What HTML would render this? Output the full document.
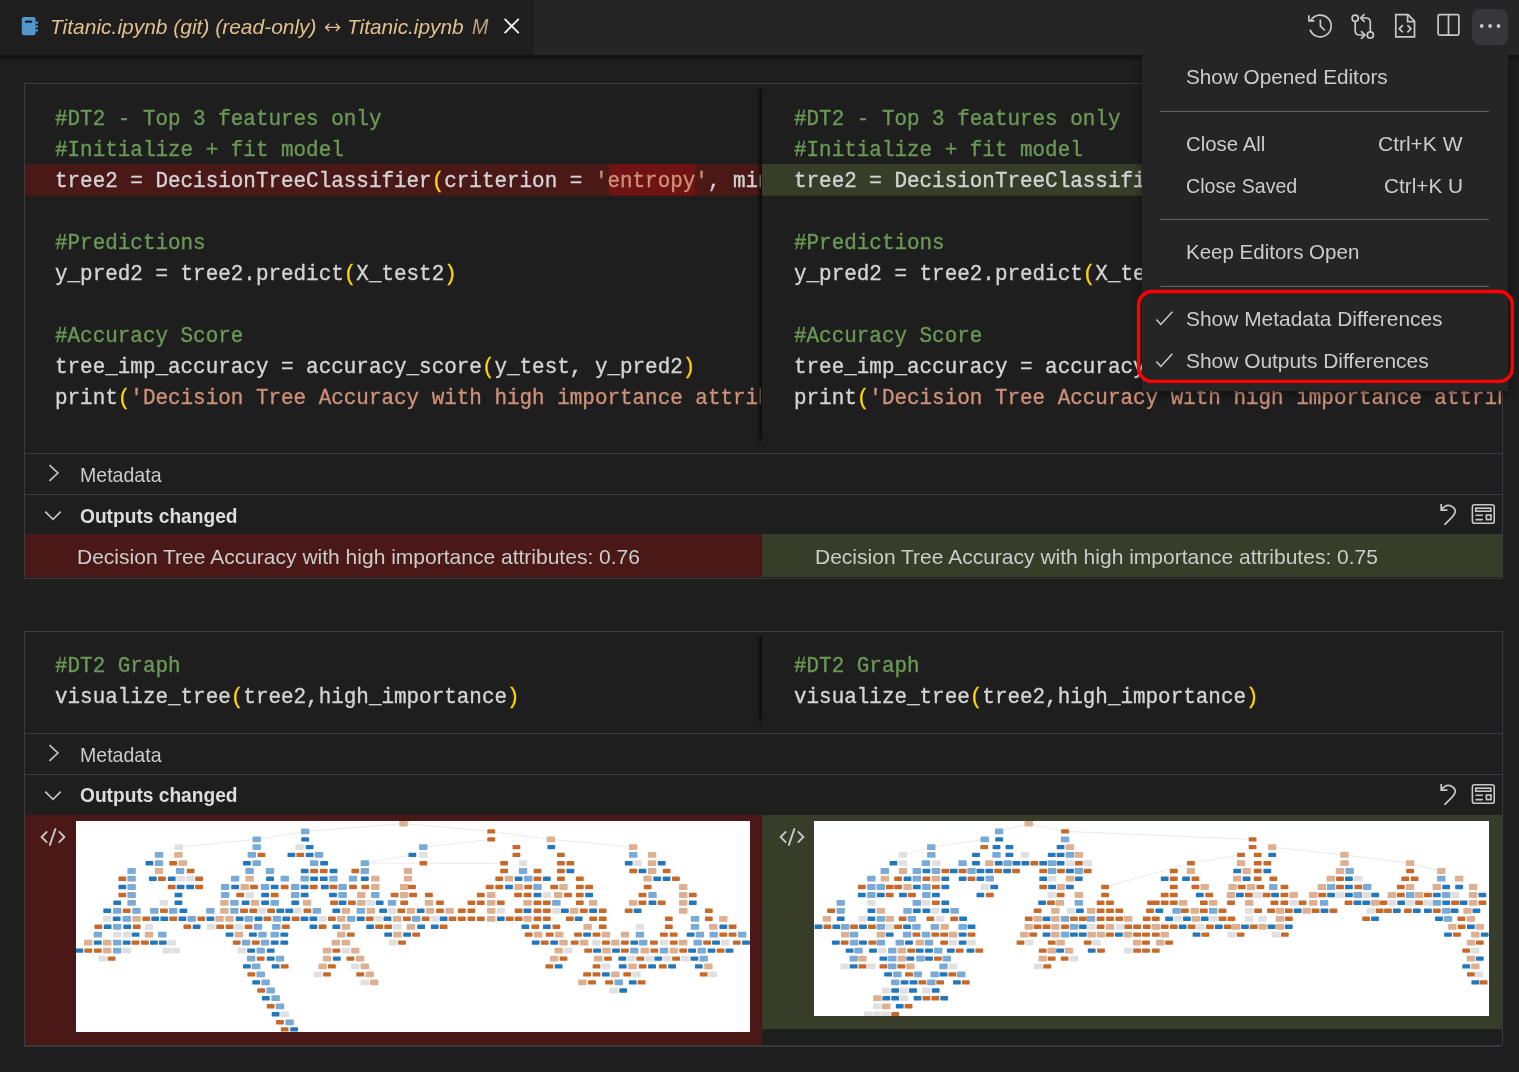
<!DOCTYPE html>
<html><head><meta charset="utf-8"><title>Titanic.ipynb diff</title>
<style>
html,body{margin:0;padding:0;background:#1e1e1e}
body{width:1519px;height:1072px;position:relative;overflow:hidden;font-family:"Liberation Sans",sans-serif}
.t{position:absolute;white-space:nowrap;font-family:"Liberation Sans",sans-serif}
.clip{position:absolute;overflow:hidden}
.code{position:absolute;white-space:pre;-webkit-text-stroke:0.35px;transform:scaleY(1.07);transform-origin:0 21.1px;font-family:"Liberation Mono",monospace;font-size:20.93px;height:31px;line-height:31px;color:#d4d4d4}
</style></head><body>
<div style="position:absolute;left:0px;top:0px;width:1519px;height:55px;background:#252526;"></div>
<div style="position:absolute;left:0px;top:0px;width:534px;height:55px;background:#1e1e1e;"></div>
<div style="position:absolute;left:0;top:55px;width:1519px;height:6px;background:linear-gradient(#151515 0,#121212 22%,#161616 45%,#181818 70%,#1c1c1c 92%,#1e1e1e)"></div>
<svg style="position:absolute;left:20px;top:16px" width="20" height="21" viewBox="0 0 20 21">
<rect x="1.8" y="1" width="13.8" height="18.2" rx="2.2" fill="#5397cc"/>
<rect x="15.6" y="5.6" width="2.4" height="2.2" rx="0.6" fill="#5397cc"/>
<rect x="15.6" y="9.4" width="2.4" height="2.2" rx="0.6" fill="#5397cc"/>
<rect x="15.6" y="13.2" width="2.4" height="2.2" rx="0.6" fill="#5397cc"/>
<rect x="4.9" y="4.4" width="7.4" height="2.4" rx="0.9" fill="#1b1f24"/>
</svg>
<div id="tabt" class="t" style="left:50.4px;top:11.79px;height:29px;line-height:29px;font-size:20.8px;color:#e2c08d;font-weight:normal;font-style:italic;transform-origin:left center;transform:scaleX(1.0079)">Titanic.ipynb (git) (read-only)</div>
<svg style="position:absolute;left:324px;top:22px" width="18" height="11" viewBox="0 0 18 11" fill="none" stroke="#e2c08d" stroke-width="1.4"><path d="M1.6 5.4H15.6M5.2 1.8L1.6 5.4L5.2 9M12 1.8L15.6 5.4L12 9"/></svg>
<div id="tabt2" class="t" style="left:347.4px;top:11.79px;height:29px;line-height:29px;font-size:20.8px;color:#e2c08d;font-weight:normal;font-style:italic;transform-origin:left center;transform:scaleX(1.0002)">Titanic.ipynb</div>
<div id="tabm" class="t" style="left:472.2px;top:11.58px;height:30px;line-height:30px;font-size:21.4px;color:#bfa183;font-weight:normal;font-style:italic;transform-origin:left center;transform:scaleX(0.9199)">M</div>
<svg style="position:absolute;left:503px;top:17px" width="18" height="18" viewBox="0 0 18 18"><path d="M1.6 1.9L15.8 16.1M15.8 1.9L1.6 16.1" stroke="#f0f0f0" stroke-width="1.9" fill="none"/></svg>
<svg style="position:absolute;left:1307px;top:13px" width="26" height="26" viewBox="-1 -1 26 26" fill="none" stroke="#c8c8c8" stroke-width="1.7">
<path d="M2.9 6.4A10.9 10.9 0 1 1 2 15.6"/>
<path d="M0.9 1.2V6.8H6.4"/>
<path d="M12.4 5.6V12.1L16.9 16.5"/>
</svg>
<svg style="position:absolute;left:1349px;top:13px" width="28" height="28" viewBox="1349 13 28 28" fill="none" stroke="#c8c8c8" stroke-width="1.7">
<circle cx="1355.2" cy="18.2" r="3.1"/>
<circle cx="1370.3" cy="34.9" r="3.1"/>
<path d="M1355.2 21.4V30.5Q1355.2 35 1359.6 35H1364.6"/>
<path d="M1361 31.2L1364.9 35L1361 38.8"/>
<path d="M1370.3 31.7V22.4Q1370.3 18 1365.9 18H1361"/>
<path d="M1364.6 14.2L1360.7 18L1364.6 21.8"/>
</svg>
<svg style="position:absolute;left:1393px;top:12px" width="25" height="28" viewBox="1393 12 25 28" fill="none" stroke="#c8c8c8" stroke-width="1.7">
<path d="M1395.8 14.7H1408L1414.5 21.2V36.9H1395.8Z"/>
<path d="M1407.6 14.9V21.6H1414.3"/>
<path d="M1402.8 25.2L1399.3 28.8L1402.8 32.4M1407.4 25.2L1410.9 28.8L1407.4 32.4"/>
</svg>
<svg style="position:absolute;left:1435px;top:12px" width="27" height="26" viewBox="1435 12 27 26" fill="none" stroke="#c8c8c8" stroke-width="1.7">
<rect x="1438.1" y="14.6" width="20.8" height="20.5" rx="1.6"/>
<path d="M1448.5 14.6V35.1"/>
</svg>
<div style="position:absolute;left:24px;top:83px;width:1479px;height:1px;background:#3a3a40;"></div>
<div style="position:absolute;left:24px;top:578px;width:1478px;height:1px;background:#3a3a40;"></div>
<div style="position:absolute;left:24px;top:83px;width:1px;height:496px;background:#3a3a40;"></div>
<div style="position:absolute;left:1502px;top:83px;width:1px;height:495px;background:#3a3a40;"></div>
<div style="position:absolute;left:25px;top:164px;width:737px;height:31px;background:#4b1818;"></div>
<div style="position:absolute;left:762px;top:164px;width:740px;height:31px;background:#373d29;"></div>
<div style="position:absolute;left:608.5px;top:164px;width:86.5px;height:31px;background:#6f1313;"></div>
<div style="position:absolute;left:25px;top:195px;width:737px;height:1px;background:rgba(75,24,24,0.6);"></div>
<div style="position:absolute;left:762px;top:195px;width:740px;height:1px;background:rgba(55,61,41,0.6);"></div>
<div style="position:absolute;left:608.5px;top:195px;width:86.5px;height:1px;background:rgba(111,19,19,0.6);"></div>
<div class="clip" style="left:25px;top:103px;width:736px;height:31px"><div class="code" style="left:30px;top:1.3px"><span style="color:#6a9955">#DT2 - Top 3 features only</span></div></div>
<div class="clip" style="left:762px;top:103px;width:739px;height:31px"><div class="code" style="left:32px;top:1.3px"><span style="color:#6a9955">#DT2 - Top 3 features only</span></div></div>
<div class="clip" style="left:25px;top:134px;width:736px;height:31px"><div class="code" style="left:30px;top:1.3px"><span style="color:#6a9955">#Initialize + fit model</span></div></div>
<div class="clip" style="left:762px;top:134px;width:739px;height:31px"><div class="code" style="left:32px;top:1.3px"><span style="color:#6a9955">#Initialize + fit model</span></div></div>
<div class="clip" style="left:25px;top:227px;width:736px;height:31px"><div class="code" style="left:30px;top:1.3px"><span style="color:#6a9955">#Predictions</span></div></div>
<div class="clip" style="left:762px;top:227px;width:739px;height:31px"><div class="code" style="left:32px;top:1.3px"><span style="color:#6a9955">#Predictions</span></div></div>
<div class="clip" style="left:25px;top:258px;width:736px;height:31px"><div class="code" style="left:30px;top:1.3px"><span style="color:#d4d4d4">y_pred2 = tree2.predict</span><span style="color:#ffd700">(</span><span style="color:#d4d4d4">X_test2</span><span style="color:#ffd700">)</span></div></div>
<div class="clip" style="left:762px;top:258px;width:739px;height:31px"><div class="code" style="left:32px;top:1.3px"><span style="color:#d4d4d4">y_pred2 = tree2.predict</span><span style="color:#ffd700">(</span><span style="color:#d4d4d4">X_test2</span><span style="color:#ffd700">)</span></div></div>
<div class="clip" style="left:25px;top:320px;width:736px;height:31px"><div class="code" style="left:30px;top:1.3px"><span style="color:#6a9955">#Accuracy Score</span></div></div>
<div class="clip" style="left:762px;top:320px;width:739px;height:31px"><div class="code" style="left:32px;top:1.3px"><span style="color:#6a9955">#Accuracy Score</span></div></div>
<div class="clip" style="left:25px;top:351px;width:736px;height:31px"><div class="code" style="left:30px;top:1.3px"><span style="color:#d4d4d4">tree_imp_accuracy = accuracy_score</span><span style="color:#ffd700">(</span><span style="color:#d4d4d4">y_test, y_pred2</span><span style="color:#ffd700">)</span></div></div>
<div class="clip" style="left:762px;top:351px;width:739px;height:31px"><div class="code" style="left:32px;top:1.3px"><span style="color:#d4d4d4">tree_imp_accuracy = accuracy_score</span><span style="color:#ffd700">(</span><span style="color:#d4d4d4">y_test, y_pred2</span><span style="color:#ffd700">)</span></div></div>
<div class="clip" style="left:25px;top:382px;width:736px;height:31px"><div class="code" style="left:30px;top:1.3px"><span style="color:#d4d4d4">print</span><span style="color:#ffd700">(</span><span style="color:#ce9178">'Decision Tree Accuracy with high importance attributes: '</span><span style="color:#d4d4d4">, tree_imp_accuracy</span><span style="color:#ffd700">)</span></div></div>
<div class="clip" style="left:762px;top:382px;width:739px;height:31px"><div class="code" style="left:32px;top:1.3px"><span style="color:#d4d4d4">print</span><span style="color:#ffd700">(</span><span style="color:#ce9178">'Decision Tree Accuracy with high importance attributes: '</span><span style="color:#d4d4d4">, tree_imp_accuracy</span><span style="color:#ffd700">)</span></div></div>
<div class="clip" style="left:25px;top:165px;width:736px;height:31px"><div class="code" style="left:30px;top:1.3px"><span style="color:#d4d4d4">tree2 = DecisionTreeClassifier</span><span style="color:#ffd700">(</span><span style="color:#d4d4d4">criterion = </span><span style="color:#ce9178">'entropy'</span><span style="color:#d4d4d4">, min_samples_split = 5</span><span style="color:#ffd700">)</span></div></div>
<div class="clip" style="left:762px;top:165px;width:739px;height:31px"><div class="code" style="left:32px;top:1.3px"><span style="color:#d4d4d4">tree2 = DecisionTreeClassifier</span><span style="color:#ffd700">(</span><span style="color:#d4d4d4">criterion = </span><span style="color:#ce9178">'gini'</span><span style="color:#d4d4d4">, min_samples_split = 5</span><span style="color:#ffd700">)</span></div></div>
<div style="position:absolute;left:755px;top:89px;width:7px;height:357px;background:linear-gradient(90deg,rgba(0,0,0,0),rgba(0,0,0,0.12) 45%,rgba(0,0,0,0.5) 72%,rgba(0,0,0,0.62));-webkit-mask-image:linear-gradient(#000 0,#000 calc(100% - 12px),transparent)"></div>
<div style="position:absolute;left:25px;top:453px;width:1477px;height:1px;background:#3a3a40;"></div>
<div style="position:absolute;left:25px;top:494px;width:1477px;height:1px;background:#3a3a40;"></div>
<svg style="position:absolute;left:48px;top:464.2px" width="12" height="18" viewBox="0 0 12 18"><path d="M1.5 1.2L9.9 9L1.5 16.8" stroke="#c8c8c8" stroke-width="1.6" fill="none"/></svg>
<div id="md453" class="t" style="left:80px;top:461.17px;height:28px;line-height:28px;font-size:20.3px;color:#cccccc;font-weight:normal;font-style:normal;transform-origin:left center;transform:scaleX(0.9638)">Metadata</div>
<svg style="position:absolute;left:44.2px;top:509.6px" width="18" height="12" viewBox="0 0 18 12"><path d="M1.2 1.6L9 9.4L16.8 1.6" stroke="#c8c8c8" stroke-width="1.6" fill="none"/></svg>
<div id="oc453" class="t" style="left:80px;top:501.57px;height:28px;line-height:28px;font-size:20.3px;color:#dddddd;font-weight:bold;font-style:normal;transform-origin:left center;transform:scaleX(0.9444)">Outputs changed</div>
<svg style="position:absolute;left:1438px;top:502px" width="20" height="25" viewBox="1438 502 20 25" fill="none" stroke="#c8c8c8" stroke-width="1.7">
<path d="M1441.2 504V510.2H1447.4"/>
<path d="M1441.6 509.6Q1446 503.6 1451.6 506.2Q1458.4 510.4 1452.6 516.6L1444.4 524.8"/></svg>
<svg style="position:absolute;left:1470px;top:502px" width="27" height="24" viewBox="1470 502 27 24" fill="none" stroke="#c8c8c8" stroke-width="1.6">
<rect x="1472.4" y="504.8" width="21.8" height="18.4" rx="2"/>
<rect x="1475.8" y="508.2" width="15" height="3" />
<path d="M1475.4 515.2H1483M1475.4 519.6H1483"/>
<rect x="1486.4" y="515" width="4.6" height="4.6"/></svg>
<div style="position:absolute;left:25px;top:534px;width:737px;height:43px;background:#4b1818;"></div>
<div style="position:absolute;left:762px;top:534px;width:740px;height:43px;background:#373d29;"></div>
<div id="o1l" class="t" style="left:77px;top:543.07px;height:28px;line-height:28px;font-size:20.3px;color:#cccccc;font-weight:normal;font-style:normal;transform-origin:left center;transform:scaleX(1.0361)">Decision Tree Accuracy with high importance attributes: 0.76</div>
<div id="o1r" class="t" style="left:815.4px;top:543.07px;height:28px;line-height:28px;font-size:20.3px;color:#cccccc;font-weight:normal;font-style:normal;transform-origin:left center;transform:scaleX(1.0361)">Decision Tree Accuracy with high importance attributes: 0.75</div>
<div style="position:absolute;left:24px;top:631px;width:1479px;height:1px;background:#3a3a40;"></div>
<div style="position:absolute;left:24px;top:1045px;width:1478px;height:2px;background:#38383d;"></div>
<div style="position:absolute;left:24px;top:631px;width:1px;height:415px;background:#3a3a40;"></div>
<div style="position:absolute;left:1502px;top:631px;width:1px;height:414px;background:#3a3a40;"></div>
<div class="clip" style="left:25px;top:650px;width:736px;height:31px"><div class="code" style="left:30px;top:1.3px"><span style="color:#6a9955">#DT2 Graph</span></div></div>
<div class="clip" style="left:25px;top:681px;width:736px;height:31px"><div class="code" style="left:30px;top:1.3px"><span style="color:#d4d4d4">visualize_tree</span><span style="color:#ffd700">(</span><span style="color:#d4d4d4">tree2,high_importance</span><span style="color:#ffd700">)</span></div></div>
<div class="clip" style="left:762px;top:650px;width:739px;height:31px"><div class="code" style="left:32px;top:1.3px"><span style="color:#6a9955">#DT2 Graph</span></div></div>
<div class="clip" style="left:762px;top:681px;width:739px;height:31px"><div class="code" style="left:32px;top:1.3px"><span style="color:#d4d4d4">visualize_tree</span><span style="color:#ffd700">(</span><span style="color:#d4d4d4">tree2,high_importance</span><span style="color:#ffd700">)</span></div></div>
<div style="position:absolute;left:755px;top:637px;width:7px;height:90px;background:linear-gradient(90deg,rgba(0,0,0,0),rgba(0,0,0,0.12) 45%,rgba(0,0,0,0.5) 72%,rgba(0,0,0,0.62));-webkit-mask-image:linear-gradient(#000 0,#000 calc(100% - 12px),transparent)"></div>
<div style="position:absolute;left:25px;top:733px;width:1477px;height:1px;background:#3a3a40;"></div>
<div style="position:absolute;left:25px;top:774px;width:1477px;height:1px;background:#3a3a40;"></div>
<svg style="position:absolute;left:48px;top:744.2px" width="12" height="18" viewBox="0 0 12 18"><path d="M1.5 1.2L9.9 9L1.5 16.8" stroke="#c8c8c8" stroke-width="1.6" fill="none"/></svg>
<div id="md733" class="t" style="left:80px;top:740.67px;height:28px;line-height:28px;font-size:20.3px;color:#cccccc;font-weight:normal;font-style:normal;transform-origin:left center;transform:scaleX(0.9638)">Metadata</div>
<svg style="position:absolute;left:44.2px;top:789.6px" width="18" height="12" viewBox="0 0 18 12"><path d="M1.2 1.6L9 9.4L16.8 1.6" stroke="#c8c8c8" stroke-width="1.6" fill="none"/></svg>
<div id="oc733" class="t" style="left:80px;top:780.77px;height:28px;line-height:28px;font-size:20.3px;color:#dddddd;font-weight:bold;font-style:normal;transform-origin:left center;transform:scaleX(0.9444)">Outputs changed</div>
<svg style="position:absolute;left:1438px;top:782px" width="20" height="25" viewBox="1438 502 20 25" fill="none" stroke="#c8c8c8" stroke-width="1.7">
<path d="M1441.2 504V510.2H1447.4"/>
<path d="M1441.6 509.6Q1446 503.6 1451.6 506.2Q1458.4 510.4 1452.6 516.6L1444.4 524.8"/></svg>
<svg style="position:absolute;left:1470px;top:782px" width="27" height="24" viewBox="1470 502 27 24" fill="none" stroke="#c8c8c8" stroke-width="1.6">
<rect x="1472.4" y="504.8" width="21.8" height="18.4" rx="2"/>
<rect x="1475.8" y="508.2" width="15" height="3" />
<path d="M1475.4 515.2H1483M1475.4 519.6H1483"/>
<rect x="1486.4" y="515" width="4.6" height="4.6"/></svg>
<div style="position:absolute;left:25px;top:815px;width:737px;height:230px;background:#4b1818;"></div>
<div style="position:absolute;left:762px;top:815px;width:740px;height:214px;background:#373d29;"></div>
<svg style="position:absolute;left:40px;top:827px" width="26" height="20" viewBox="0 0 26 20" fill="none" stroke="#c8c8c8" stroke-width="1.9"><path d="M7.2 4.4L1.6 10L7.2 15.6M18.8 4.4L24.4 10L18.8 15.6M15.6 1.4L9.6 18.6"/></svg>
<svg style="position:absolute;left:779px;top:827px" width="26" height="20" viewBox="0 0 26 20" fill="none" stroke="#c8c8c8" stroke-width="1.9"><path d="M7.2 4.4L1.6 10L7.2 15.6M18.8 4.4L24.4 10L18.8 15.6M15.6 1.4L9.6 18.6"/></svg>
<svg style="position:absolute;left:76px;top:821px" width="674" height="211" viewBox="76 821 674 211">
<rect x="76" y="821" width="674" height="211" fill="#fff"/>
<path d="M403.5 823.6L305.2 831.4M305.2 831.4L256.7 839.4M256.7 839.4L178.8 847.1M403.5 823.6L491.2 831.4M491.2 831.4L550.8 839.4M550.8 839.4L633.2 847.1M491.2 839.4L423.3 847.1M504.1 863.2L364.8 863.2M364.8 863.2L412.4 854.9" stroke="#e4e4e4" stroke-width="0.8" fill="none"/>
<g style="filter:blur(0.45px)">
<path d="M400.0 821.4h7v4.4h-7zM174.9 852.7h7v4.4h-7zM179.3 861.0h7v4.4h-7zM155.5 868.8h7v4.4h-7zM404.5 868.8h7v4.4h-7zM246.1 876.5h7v4.4h-7zM371.8 876.5h7v4.4h-7zM404.5 876.5h7v4.4h-7zM241.2 884.8h7v4.4h-7zM371.8 884.8h7v4.4h-7zM400.7 884.8h7v4.4h-7zM357.8 892.8h7v4.4h-7zM400.7 892.8h7v4.4h-7zM220.9 900.6h7v4.4h-7zM251.6 900.6h7v4.4h-7zM303.5 900.6h7v4.4h-7zM357.8 900.6h7v4.4h-7zM220.9 908.6h7v4.4h-7zM342.4 908.6h7v4.4h-7zM367.3 908.6h7v4.4h-7zM407.4 908.6h7v4.4h-7zM133.0 916.6h7v4.4h-7zM216.0 916.6h7v4.4h-7zM226.0 916.6h7v4.4h-7zM337.7 916.6h7v4.4h-7zM393.6 916.6h7v4.4h-7zM342.4 924.6h7v4.4h-7zM407.4 924.6h7v4.4h-7zM145.5 932.4h7v4.4h-7zM235.4 932.4h7v4.4h-7zM337.7 932.4h7v4.4h-7zM394.0 932.4h7v4.4h-7zM84.7 940.4h7v4.4h-7zM103.7 940.4h7v4.4h-7zM332.4 940.4h7v4.4h-7zM342.4 940.4h7v4.4h-7zM103.7 948.4h7v4.4h-7zM323.5 948.4h7v4.4h-7zM351.8 948.4h7v4.4h-7zM323.5 956.4h7v4.4h-7zM356.7 956.4h7v4.4h-7zM319.1 964.2h7v4.4h-7zM361.3 964.2h7v4.4h-7zM366.2 972.2h7v4.4h-7zM370.7 980.2h7v4.4h-7zM547.3 837.2h7v4.4h-7zM629.7 844.9h7v4.4h-7zM648.6 852.7h7v4.4h-7zM648.6 861.0h7v4.4h-7zM648.6 868.8h7v4.4h-7zM505.5 876.5h7v4.4h-7zM644.1 876.5h7v4.4h-7zM515.1 884.8h7v4.4h-7zM560.0 884.8h7v4.4h-7zM679.7 884.8h7v4.4h-7zM487.7 892.8h7v4.4h-7zM554.7 892.8h7v4.4h-7zM679.7 892.8h7v4.4h-7zM425.4 900.6h7v4.4h-7zM487.7 900.6h7v4.4h-7zM524.0 900.6h7v4.4h-7zM589.6 900.6h7v4.4h-7zM629.7 900.6h7v4.4h-7zM679.7 900.6h7v4.4h-7zM426.5 908.6h7v4.4h-7zM446.1 908.6h7v4.4h-7zM487.7 908.6h7v4.4h-7zM570.7 908.6h7v4.4h-7zM679.7 908.6h7v4.4h-7zM487.7 916.6h7v4.4h-7zM524.0 916.6h7v4.4h-7zM719.8 916.6h7v4.4h-7zM584.1 924.6h7v4.4h-7zM709.8 924.6h7v4.4h-7zM534.7 932.4h7v4.4h-7zM555.8 932.4h7v4.4h-7zM602.5 932.4h7v4.4h-7zM621.4 932.4h7v4.4h-7zM560.0 940.4h7v4.4h-7zM580.7 940.4h7v4.4h-7zM611.9 940.4h7v4.4h-7zM679.7 940.4h7v4.4h-7zM555.1 948.4h7v4.4h-7zM603.0 948.4h7v4.4h-7zM641.3 948.4h7v4.4h-7zM670.2 948.4h7v4.4h-7zM550.7 956.4h7v4.4h-7zM594.7 956.4h7v4.4h-7zM629.0 964.2h7v4.4h-7zM704.9 964.2h7v4.4h-7zM611.9 972.2h7v4.4h-7zM578.9 980.2h7v4.4h-7z" fill="#ddb092" stroke="#ddb092" stroke-width="1.4" stroke-linejoin="round"/>
<path d="M301.7 829.2h7v4.4h-7zM253.2 837.2h7v4.4h-7zM253.2 844.9h7v4.4h-7zM155.5 852.7h7v4.4h-7zM248.3 852.7h7v4.4h-7zM315.5 852.7h7v4.4h-7zM155.5 861.0h7v4.4h-7zM253.2 861.0h7v4.4h-7zM310.6 861.0h7v4.4h-7zM361.3 861.0h7v4.4h-7zM128.1 868.8h7v4.4h-7zM176.6 868.8h7v4.4h-7zM246.1 868.8h7v4.4h-7zM266.5 868.8h7v4.4h-7zM361.3 868.8h7v4.4h-7zM128.1 876.5h7v4.4h-7zM231.6 876.5h7v4.4h-7zM281.2 876.5h7v4.4h-7zM301.2 876.5h7v4.4h-7zM330.0 876.5h7v4.4h-7zM349.5 876.5h7v4.4h-7zM128.1 884.8h7v4.4h-7zM221.6 884.8h7v4.4h-7zM261.6 884.8h7v4.4h-7zM291.7 884.8h7v4.4h-7zM339.1 884.8h7v4.4h-7zM128.1 892.8h7v4.4h-7zM221.6 892.8h7v4.4h-7zM291.7 892.8h7v4.4h-7zM339.1 892.8h7v4.4h-7zM371.8 892.8h7v4.4h-7zM128.1 900.6h7v4.4h-7zM230.9 900.6h7v4.4h-7zM271.2 900.6h7v4.4h-7zM388.5 900.6h7v4.4h-7zM113.7 908.6h7v4.4h-7zM133.0 908.6h7v4.4h-7zM150.8 908.6h7v4.4h-7zM169.7 908.6h7v4.4h-7zM206.9 908.6h7v4.4h-7zM230.9 908.6h7v4.4h-7zM313.3 908.6h7v4.4h-7zM357.3 908.6h7v4.4h-7zM123.2 916.6h7v4.4h-7zM188.2 916.6h7v4.4h-7zM245.2 916.6h7v4.4h-7zM273.4 916.6h7v4.4h-7zM347.8 916.6h7v4.4h-7zM113.7 924.6h7v4.4h-7zM254.5 924.6h7v4.4h-7zM272.8 924.6h7v4.4h-7zM94.3 932.4h7v4.4h-7zM158.8 932.4h7v4.4h-7zM259.0 932.4h7v4.4h-7zM271.2 932.4h7v4.4h-7zM113.7 940.4h7v4.4h-7zM242.7 940.4h7v4.4h-7zM261.6 940.4h7v4.4h-7zM113.7 948.4h7v4.4h-7zM257.2 948.4h7v4.4h-7zM247.6 956.4h7v4.4h-7zM276.5 956.4h7v4.4h-7zM252.7 964.2h7v4.4h-7zM257.2 972.2h7v4.4h-7zM262.1 980.2h7v4.4h-7zM267.2 988.3h7v4.4h-7zM272.1 996.0h7v4.4h-7zM276.5 1004.1h7v4.4h-7zM286.1 1020.1h7v4.4h-7zM419.8 844.9h7v4.4h-7zM629.7 852.7h7v4.4h-7zM519.5 868.8h7v4.4h-7zM524.7 876.5h7v4.4h-7zM534.0 884.8h7v4.4h-7zM649.0 892.8h7v4.4h-7zM552.9 900.6h7v4.4h-7zM412.7 916.6h7v4.4h-7zM691.5 916.6h7v4.4h-7zM691.5 924.6h7v4.4h-7zM636.4 932.4h7v4.4h-7zM696.4 932.4h7v4.4h-7zM710.2 932.4h7v4.4h-7zM738.7 932.4h7v4.4h-7zM639.7 940.4h7v4.4h-7zM694.2 940.4h7v4.4h-7zM630.8 948.4h7v4.4h-7zM660.4 948.4h7v4.4h-7zM698.2 948.4h7v4.4h-7zM700.2 956.4h7v4.4h-7zM615.2 980.2h7v4.4h-7z" fill="#7aaad6" stroke="#7aaad6" stroke-width="1.4" stroke-linejoin="round"/>
<path d="M302.0 837.9h6.4v3h-6.4zM306.4 845.6h6.4v3h-6.4zM288.2 853.4h6.4v3h-6.4zM306.4 853.4h6.4v3h-6.4zM409.2 853.4h6.4v3h-6.4zM146.2 861.7h6.4v3h-6.4zM243.7 861.7h6.4v3h-6.4zM320.9 861.7h6.4v3h-6.4zM301.5 869.5h6.4v3h-6.4zM330.3 869.5h6.4v3h-6.4zM149.6 877.2h6.4v3h-6.4zM168.5 877.2h6.4v3h-6.4zM266.8 877.2h6.4v3h-6.4zM310.9 877.2h6.4v3h-6.4zM320.5 877.2h6.4v3h-6.4zM361.6 877.2h6.4v3h-6.4zM119.1 885.5h6.4v3h-6.4zM177.4 885.5h6.4v3h-6.4zM187.0 885.5h6.4v3h-6.4zM231.9 885.5h6.4v3h-6.4zM271.5 885.5h6.4v3h-6.4zM301.5 885.5h6.4v3h-6.4zM321.6 885.5h6.4v3h-6.4zM175.2 893.5h6.4v3h-6.4zM261.9 893.5h6.4v3h-6.4zM301.5 893.5h6.4v3h-6.4zM329.8 893.5h6.4v3h-6.4zM114.0 901.3h6.4v3h-6.4zM175.2 901.3h6.4v3h-6.4zM242.4 901.3h6.4v3h-6.4zM261.9 901.3h6.4v3h-6.4zM292.0 901.3h6.4v3h-6.4zM339.4 901.3h6.4v3h-6.4zM376.5 901.3h6.4v3h-6.4zM104.0 909.3h6.4v3h-6.4zM180.1 909.3h6.4v3h-6.4zM277.1 909.3h6.4v3h-6.4zM286.0 909.3h6.4v3h-6.4zM333.1 909.3h6.4v3h-6.4zM379.9 909.3h6.4v3h-6.4zM113.5 917.3h6.4v3h-6.4zM152.0 917.3h6.4v3h-6.4zM161.1 917.3h6.4v3h-6.4zM179.2 917.3h6.4v3h-6.4zM207.2 917.3h6.4v3h-6.4zM236.4 917.3h6.4v3h-6.4zM255.3 917.3h6.4v3h-6.4zM283.1 917.3h6.4v3h-6.4zM301.3 917.3h6.4v3h-6.4zM310.2 917.3h6.4v3h-6.4zM357.6 917.3h6.4v3h-6.4zM384.3 917.3h6.4v3h-6.4zM104.4 925.3h6.4v3h-6.4zM124.0 925.3h6.4v3h-6.4zM193.4 925.3h6.4v3h-6.4zM310.2 925.3h6.4v3h-6.4zM333.1 925.3h6.4v3h-6.4zM367.0 925.3h6.4v3h-6.4zM132.4 933.1h6.4v3h-6.4zM226.3 933.1h6.4v3h-6.4zM249.7 933.1h6.4v3h-6.4zM281.1 933.1h6.4v3h-6.4zM385.0 933.1h6.4v3h-6.4zM403.9 933.1h6.4v3h-6.4zM94.6 941.1h6.4v3h-6.4zM123.5 941.1h6.4v3h-6.4zM150.7 941.1h6.4v3h-6.4zM159.6 941.1h6.4v3h-6.4zM271.5 941.1h6.4v3h-6.4zM281.1 941.1h6.4v3h-6.4zM76.1 949.1h6.4v3h-6.4zM247.9 949.1h6.4v3h-6.4zM267.5 949.1h6.4v3h-6.4zM267.5 957.1h6.4v3h-6.4zM333.6 957.1h6.4v3h-6.4zM243.7 964.9h6.4v3h-6.4zM272.4 964.9h6.4v3h-6.4zM253.0 980.9h6.4v3h-6.4zM262.6 996.7h6.4v3h-6.4zM272.4 1012.8h6.4v3h-6.4zM290.9 1027.9h6.4v3h-6.4zM548.1 845.6h6.4v3h-6.4zM625.5 861.7h6.4v3h-6.4zM658.5 861.7h6.4v3h-6.4zM567.2 869.5h6.4v3h-6.4zM639.3 869.5h6.4v3h-6.4zM515.4 877.2h6.4v3h-6.4zM543.6 877.2h6.4v3h-6.4zM654.0 877.2h6.4v3h-6.4zM663.4 877.2h6.4v3h-6.4zM505.8 885.5h6.4v3h-6.4zM534.3 893.5h6.4v3h-6.4zM585.9 893.5h6.4v3h-6.4zM649.3 901.3h6.4v3h-6.4zM689.6 901.3h6.4v3h-6.4zM417.5 909.3h6.4v3h-6.4zM524.3 909.3h6.4v3h-6.4zM561.7 909.3h6.4v3h-6.4zM589.9 909.3h6.4v3h-6.4zM634.4 909.3h6.4v3h-6.4zM440.4 917.3h6.4v3h-6.4zM497.6 917.3h6.4v3h-6.4zM575.5 917.3h6.4v3h-6.4zM417.9 925.3h6.4v3h-6.4zM431.5 925.3h6.4v3h-6.4zM522.1 925.3h6.4v3h-6.4zM543.6 925.3h6.4v3h-6.4zM720.1 925.3h6.4v3h-6.4zM583.9 933.1h6.4v3h-6.4zM687.4 933.1h6.4v3h-6.4zM532.5 941.1h6.4v3h-6.4zM551.0 941.1h6.4v3h-6.4zM631.1 941.1h6.4v3h-6.4zM712.8 941.1h6.4v3h-6.4zM742.8 941.1h6.4v3h-6.4zM593.9 949.1h6.4v3h-6.4zM612.8 949.1h6.4v3h-6.4zM688.9 949.1h6.4v3h-6.4zM708.3 949.1h6.4v3h-6.4zM726.3 949.1h6.4v3h-6.4zM619.1 957.1h6.4v3h-6.4zM655.1 957.1h6.4v3h-6.4zM691.2 957.1h6.4v3h-6.4zM555.4 964.9h6.4v3h-6.4zM619.5 964.9h6.4v3h-6.4zM648.9 964.9h6.4v3h-6.4zM668.9 964.9h6.4v3h-6.4zM695.6 964.9h6.4v3h-6.4zM602.6 972.9h6.4v3h-6.4zM629.5 980.9h6.4v3h-6.4zM620.0 989.0h6.4v3h-6.4z" fill="#2477bb" stroke="#2477bb" stroke-width="1.4" stroke-linejoin="round"/>
<path d="M175.3 844.9h7v4.4h-7zM296.1 844.9h7v4.4h-7zM177.1 876.5h7v4.4h-7zM186.7 876.5h7v4.4h-7zM246.1 892.8h7v4.4h-7zM160.4 900.6h7v4.4h-7zM367.3 900.6h7v4.4h-7zM258.3 908.6h7v4.4h-7zM293.9 908.6h7v4.4h-7zM388.5 908.6h7v4.4h-7zM103.7 916.6h7v4.4h-7zM319.1 916.6h7v4.4h-7zM375.1 916.6h7v4.4h-7zM145.5 924.6h7v4.4h-7zM207.6 924.6h7v4.4h-7zM235.4 924.6h7v4.4h-7zM394.0 924.6h7v4.4h-7zM113.7 932.4h7v4.4h-7zM123.7 932.4h7v4.4h-7zM168.2 940.4h7v4.4h-7zM389.6 940.4h7v4.4h-7zM123.2 948.4h7v4.4h-7zM163.3 948.4h7v4.4h-7zM172.2 948.4h7v4.4h-7zM238.3 948.4h7v4.4h-7zM342.4 948.4h7v4.4h-7zM99.2 956.4h7v4.4h-7zM351.8 964.2h7v4.4h-7zM314.6 972.2h7v4.4h-7zM361.3 980.2h7v4.4h-7zM281.2 1012.1h7v4.4h-7zM419.8 852.7h7v4.4h-7zM519.5 861.0h7v4.4h-7zM634.1 861.0h7v4.4h-7zM543.3 892.8h7v4.4h-7zM497.3 908.6h7v4.4h-7zM552.9 908.6h7v4.4h-7zM431.2 916.6h7v4.4h-7zM636.4 924.6h7v4.4h-7zM593.0 940.4h7v4.4h-7zM660.4 940.4h7v4.4h-7zM721.6 940.4h7v4.4h-7zM564.7 948.4h7v4.4h-7zM627.9 956.4h7v4.4h-7zM645.9 956.4h7v4.4h-7zM663.7 956.4h7v4.4h-7zM681.5 956.4h7v4.4h-7zM602.3 964.2h7v4.4h-7zM633.0 972.2h7v4.4h-7zM709.3 972.2h7v4.4h-7zM610.3 988.3h7v4.4h-7z" fill="#e0e0e0" stroke="#e0e0e0" stroke-width="1.4" stroke-linejoin="round"/>
<path d="M258.2 853.4h6.4v3h-6.4zM297.1 853.4h6.4v3h-6.4zM170.0 861.7h6.4v3h-6.4zM187.4 869.5h6.4v3h-6.4zM310.9 869.5h6.4v3h-6.4zM320.5 869.5h6.4v3h-6.4zM352.1 869.5h6.4v3h-6.4zM119.1 877.2h6.4v3h-6.4zM158.7 877.2h6.4v3h-6.4zM195.9 877.2h6.4v3h-6.4zM168.5 885.5h6.4v3h-6.4zM195.9 885.5h6.4v3h-6.4zM250.8 885.5h6.4v3h-6.4zM281.5 885.5h6.4v3h-6.4zM310.5 885.5h6.4v3h-6.4zM330.3 885.5h6.4v3h-6.4zM349.8 885.5h6.4v3h-6.4zM362.1 885.5h6.4v3h-6.4zM408.8 885.5h6.4v3h-6.4zM119.1 893.5h6.4v3h-6.4zM237.0 893.5h6.4v3h-6.4zM271.5 893.5h6.4v3h-6.4zM391.4 893.5h6.4v3h-6.4zM409.9 893.5h6.4v3h-6.4zM330.9 901.3h6.4v3h-6.4zM348.7 901.3h6.4v3h-6.4zM401.0 901.3h6.4v3h-6.4zM123.5 909.3h6.4v3h-6.4zM160.7 909.3h6.4v3h-6.4zM240.8 909.3h6.4v3h-6.4zM250.1 909.3h6.4v3h-6.4zM267.9 909.3h6.4v3h-6.4zM304.2 909.3h6.4v3h-6.4zM398.1 909.3h6.4v3h-6.4zM143.1 917.3h6.4v3h-6.4zM170.0 917.3h6.4v3h-6.4zM198.1 917.3h6.4v3h-6.4zM264.2 917.3h6.4v3h-6.4zM292.4 917.3h6.4v3h-6.4zM328.7 917.3h6.4v3h-6.4zM366.5 917.3h6.4v3h-6.4zM403.7 917.3h6.4v3h-6.4zM95.1 925.3h6.4v3h-6.4zM133.5 925.3h6.4v3h-6.4zM184.1 925.3h6.4v3h-6.4zM217.0 925.3h6.4v3h-6.4zM226.3 925.3h6.4v3h-6.4zM245.3 925.3h6.4v3h-6.4zM282.6 925.3h6.4v3h-6.4zM319.4 925.3h6.4v3h-6.4zM375.9 925.3h6.4v3h-6.4zM385.0 925.3h6.4v3h-6.4zM347.6 933.1h6.4v3h-6.4zM132.4 941.1h6.4v3h-6.4zM141.8 941.1h6.4v3h-6.4zM233.5 941.1h6.4v3h-6.4zM252.6 941.1h6.4v3h-6.4zM398.8 941.1h6.4v3h-6.4zM85.0 949.1h6.4v3h-6.4zM94.6 949.1h6.4v3h-6.4zM333.1 949.1h6.4v3h-6.4zM108.4 957.1h6.4v3h-6.4zM257.5 957.1h6.4v3h-6.4zM347.2 957.1h6.4v3h-6.4zM281.5 964.9h6.4v3h-6.4zM328.7 964.9h6.4v3h-6.4zM248.1 972.9h6.4v3h-6.4zM323.8 972.9h6.4v3h-6.4zM357.0 972.9h6.4v3h-6.4zM257.9 989.0h6.4v3h-6.4zM267.5 1004.8h6.4v3h-6.4zM276.8 1020.8h6.4v3h-6.4zM281.5 1027.9h6.4v3h-6.4zM488.0 829.9h6.4v3h-6.4zM488.0 837.9h6.4v3h-6.4zM513.2 845.6h6.4v3h-6.4zM513.2 853.4h6.4v3h-6.4zM557.7 853.4h6.4v3h-6.4zM420.1 861.7h6.4v3h-6.4zM500.9 861.7h6.4v3h-6.4zM557.7 861.7h6.4v3h-6.4zM567.2 861.7h6.4v3h-6.4zM500.9 869.5h6.4v3h-6.4zM534.3 869.5h6.4v3h-6.4zM557.7 869.5h6.4v3h-6.4zM630.0 869.5h6.4v3h-6.4zM663.4 869.5h6.4v3h-6.4zM496.0 877.2h6.4v3h-6.4zM534.3 877.2h6.4v3h-6.4zM557.7 877.2h6.4v3h-6.4zM576.6 877.2h6.4v3h-6.4zM672.7 877.2h6.4v3h-6.4zM486.5 885.5h6.4v3h-6.4zM496.0 885.5h6.4v3h-6.4zM525.0 885.5h6.4v3h-6.4zM551.0 885.5h6.4v3h-6.4zM576.6 885.5h6.4v3h-6.4zM585.9 885.5h6.4v3h-6.4zM644.4 885.5h6.4v3h-6.4zM425.7 893.5h6.4v3h-6.4zM477.6 893.5h6.4v3h-6.4zM514.9 893.5h6.4v3h-6.4zM524.3 893.5h6.4v3h-6.4zM564.8 893.5h6.4v3h-6.4zM576.6 893.5h6.4v3h-6.4zM639.3 893.5h6.4v3h-6.4zM689.6 893.5h6.4v3h-6.4zM436.8 901.3h6.4v3h-6.4zM468.2 901.3h6.4v3h-6.4zM477.6 901.3h6.4v3h-6.4zM497.6 901.3h6.4v3h-6.4zM534.3 901.3h6.4v3h-6.4zM543.6 901.3h6.4v3h-6.4zM576.6 901.3h6.4v3h-6.4zM639.3 901.3h6.4v3h-6.4zM658.5 901.3h6.4v3h-6.4zM436.8 909.3h6.4v3h-6.4zM458.6 909.3h6.4v3h-6.4zM468.2 909.3h6.4v3h-6.4zM515.4 909.3h6.4v3h-6.4zM534.3 909.3h6.4v3h-6.4zM543.6 909.3h6.4v3h-6.4zM580.6 909.3h6.4v3h-6.4zM599.5 909.3h6.4v3h-6.4zM625.5 909.3h6.4v3h-6.4zM705.6 909.3h6.4v3h-6.4zM422.4 917.3h6.4v3h-6.4zM449.3 917.3h6.4v3h-6.4zM458.6 917.3h6.4v3h-6.4zM468.2 917.3h6.4v3h-6.4zM477.6 917.3h6.4v3h-6.4zM506.5 917.3h6.4v3h-6.4zM515.4 917.3h6.4v3h-6.4zM534.3 917.3h6.4v3h-6.4zM543.6 917.3h6.4v3h-6.4zM566.6 917.3h6.4v3h-6.4zM589.9 917.3h6.4v3h-6.4zM599.5 917.3h6.4v3h-6.4zM665.6 917.3h6.4v3h-6.4zM705.6 917.3h6.4v3h-6.4zM440.4 925.3h6.4v3h-6.4zM532.1 925.3h6.4v3h-6.4zM553.2 925.3h6.4v3h-6.4zM599.5 925.3h6.4v3h-6.4zM665.6 925.3h6.4v3h-6.4zM729.4 925.3h6.4v3h-6.4zM413.0 933.1h6.4v3h-6.4zM525.4 933.1h6.4v3h-6.4zM546.5 933.1h6.4v3h-6.4zM574.8 933.1h6.4v3h-6.4zM593.3 933.1h6.4v3h-6.4zM660.7 933.1h6.4v3h-6.4zM670.5 933.1h6.4v3h-6.4zM720.1 933.1h6.4v3h-6.4zM729.4 933.1h6.4v3h-6.4zM541.6 941.1h6.4v3h-6.4zM571.5 941.1h6.4v3h-6.4zM602.8 941.1h6.4v3h-6.4zM621.7 941.1h6.4v3h-6.4zM650.7 941.1h6.4v3h-6.4zM670.5 941.1h6.4v3h-6.4zM703.9 941.1h6.4v3h-6.4zM733.5 941.1h6.4v3h-6.4zM585.0 949.1h6.4v3h-6.4zM621.7 949.1h6.4v3h-6.4zM651.1 949.1h6.4v3h-6.4zM680.0 949.1h6.4v3h-6.4zM717.4 949.1h6.4v3h-6.4zM560.3 957.1h6.4v3h-6.4zM604.8 957.1h6.4v3h-6.4zM637.1 957.1h6.4v3h-6.4zM672.9 957.1h6.4v3h-6.4zM546.1 964.9h6.4v3h-6.4zM593.3 964.9h6.4v3h-6.4zM639.5 964.9h6.4v3h-6.4zM659.6 964.9h6.4v3h-6.4zM583.9 972.9h6.4v3h-6.4zM593.3 972.9h6.4v3h-6.4zM624.0 972.9h6.4v3h-6.4zM700.5 972.9h6.4v3h-6.4zM588.8 980.9h6.4v3h-6.4zM605.9 980.9h6.4v3h-6.4zM638.4 980.9h6.4v3h-6.4z" fill="#c66a2b" stroke="#c66a2b" stroke-width="1.4" stroke-linejoin="round"/>
</g></svg>
<svg style="position:absolute;left:814px;top:821px" width="675" height="195" viewBox="814 821 675 195">
<rect x="814" y="821" width="675" height="195" fill="#fff"/>
<path d="M1028.7 823.6L999.1 831.4M1028.7 823.6L1065.0 831.4M1065.0 831.4L1252.6 839.4M984.7 839.4L931.3 847.1M931.3 847.1L903.0 854.9M1272.2 847.1L1344.5 854.9M1344.5 854.9L1410.1 863.2M1410.1 863.2L1441.3 871.0M1105.1 887.0L1190.9 863.2M1190.9 863.2L1241.0 854.9" stroke="#e4e4e4" stroke-width="0.8" fill="none"/>
<g style="filter:blur(0.45px)">
<path d="M1025.2 821.4h7v4.4h-7zM1066.4 844.9h7v4.4h-7zM1075.3 852.7h7v4.4h-7zM985.8 861.0h7v4.4h-7zM899.5 868.8h7v4.4h-7zM881.3 876.5h7v4.4h-7zM932.4 876.5h7v4.4h-7zM1066.4 876.5h7v4.4h-7zM904.0 884.8h7v4.4h-7zM1057.5 884.8h7v4.4h-7zM1075.3 892.8h7v4.4h-7zM1056.4 900.6h7v4.4h-7zM877.3 908.6h7v4.4h-7zM1051.9 908.6h7v4.4h-7zM1087.5 908.6h7v4.4h-7zM823.4 916.6h7v4.4h-7zM886.2 916.6h7v4.4h-7zM1034.1 916.6h7v4.4h-7zM1051.9 916.6h7v4.4h-7zM1124.7 916.6h7v4.4h-7zM941.1 924.6h7v4.4h-7zM1025.2 924.6h7v4.4h-7zM1051.9 924.6h7v4.4h-7zM1106.5 924.6h7v4.4h-7zM841.7 932.4h7v4.4h-7zM877.3 932.4h7v4.4h-7zM949.6 932.4h7v4.4h-7zM1020.8 932.4h7v4.4h-7zM1051.9 932.4h7v4.4h-7zM1088.2 932.4h7v4.4h-7zM1097.5 932.4h7v4.4h-7zM1124.3 932.4h7v4.4h-7zM916.2 940.4h7v4.4h-7zM1057.1 940.4h7v4.4h-7zM1133.6 940.4h7v4.4h-7zM898.4 948.4h7v4.4h-7zM1048.2 948.4h7v4.4h-7zM1065.5 948.4h7v4.4h-7zM859.0 956.4h7v4.4h-7zM898.4 956.4h7v4.4h-7zM1039.2 956.4h7v4.4h-7zM906.9 964.2h7v4.4h-7zM873.9 996.0h7v4.4h-7zM882.8 1004.1h7v4.4h-7zM1268.7 844.9h7v4.4h-7zM1341.0 852.7h7v4.4h-7zM1237.5 861.0h7v4.4h-7zM1341.0 861.0h7v4.4h-7zM1406.6 861.0h7v4.4h-7zM1187.4 868.8h7v4.4h-7zM1243.1 868.8h7v4.4h-7zM1336.5 868.8h7v4.4h-7zM1437.8 868.8h7v4.4h-7zM1233.7 876.5h7v4.4h-7zM1327.2 876.5h7v4.4h-7zM1455.6 876.5h7v4.4h-7zM1201.2 884.8h7v4.4h-7zM1229.1 884.8h7v4.4h-7zM1247.5 884.8h7v4.4h-7zM1318.3 884.8h7v4.4h-7zM1406.6 884.8h7v4.4h-7zM1433.3 884.8h7v4.4h-7zM1469.6 884.8h7v4.4h-7zM1227.5 892.8h7v4.4h-7zM1290.2 892.8h7v4.4h-7zM1309.8 892.8h7v4.4h-7zM1388.4 892.8h7v4.4h-7zM1415.5 892.8h7v4.4h-7zM1469.6 892.8h7v4.4h-7zM1179.7 900.6h7v4.4h-7zM1209.7 900.6h7v4.4h-7zM1245.7 900.6h7v4.4h-7zM1309.8 900.6h7v4.4h-7zM1371.7 900.6h7v4.4h-7zM1469.6 900.6h7v4.4h-7zM1191.2 908.6h7v4.4h-7zM1276.4 908.6h7v4.4h-7zM1303.2 908.6h7v4.4h-7zM1464.0 908.6h7v4.4h-7zM1192.3 916.6h7v4.4h-7zM1276.4 916.6h7v4.4h-7zM1467.4 916.6h7v4.4h-7zM1152.3 924.6h7v4.4h-7zM1232.6 924.6h7v4.4h-7zM1259.1 924.6h7v4.4h-7zM1276.4 924.6h7v4.4h-7zM1448.9 924.6h7v4.4h-7zM1476.3 924.6h7v4.4h-7zM1161.2 932.4h7v4.4h-7zM1471.8 932.4h7v4.4h-7zM1156.7 940.4h7v4.4h-7zM1467.4 940.4h7v4.4h-7zM1467.4 956.4h7v4.4h-7zM1471.8 964.2h7v4.4h-7z" fill="#ddb092" stroke="#ddb092" stroke-width="1.4" stroke-linejoin="round"/>
<path d="M995.6 829.2h7v4.4h-7zM981.2 837.2h7v4.4h-7zM1061.5 837.2h7v4.4h-7zM927.8 844.9h7v4.4h-7zM927.8 852.7h7v4.4h-7zM993.0 852.7h7v4.4h-7zM1066.4 852.7h7v4.4h-7zM922.4 861.0h7v4.4h-7zM959.1 861.0h7v4.4h-7zM1004.1 861.0h7v4.4h-7zM1048.6 861.0h7v4.4h-7zM881.3 868.8h7v4.4h-7zM913.3 868.8h7v4.4h-7zM932.4 868.8h7v4.4h-7zM968.0 868.8h7v4.4h-7zM1048.6 868.8h7v4.4h-7zM1075.3 868.8h7v4.4h-7zM867.9 876.5h7v4.4h-7zM913.3 876.5h7v4.4h-7zM986.3 876.5h7v4.4h-7zM867.9 884.8h7v4.4h-7zM877.3 884.8h7v4.4h-7zM922.9 884.8h7v4.4h-7zM867.9 892.8h7v4.4h-7zM922.9 892.8h7v4.4h-7zM837.2 900.6h7v4.4h-7zM913.3 900.6h7v4.4h-7zM1075.3 900.6h7v4.4h-7zM837.2 908.6h7v4.4h-7zM904.0 908.6h7v4.4h-7zM951.1 908.6h7v4.4h-7zM877.3 916.6h7v4.4h-7zM908.4 916.6h7v4.4h-7zM1061.5 916.6h7v4.4h-7zM1087.5 916.6h7v4.4h-7zM841.7 924.6h7v4.4h-7zM877.3 924.6h7v4.4h-7zM912.9 924.6h7v4.4h-7zM931.3 924.6h7v4.4h-7zM959.1 924.6h7v4.4h-7zM1070.4 924.6h7v4.4h-7zM850.6 932.4h7v4.4h-7zM903.5 932.4h7v4.4h-7zM922.4 932.4h7v4.4h-7zM1061.5 932.4h7v4.4h-7zM850.6 940.4h7v4.4h-7zM877.3 940.4h7v4.4h-7zM896.2 940.4h7v4.4h-7zM925.5 940.4h7v4.4h-7zM855.0 948.4h7v4.4h-7zM888.8 948.4h7v4.4h-7zM934.7 948.4h7v4.4h-7zM850.1 956.4h7v4.4h-7zM888.8 956.4h7v4.4h-7zM916.9 956.4h7v4.4h-7zM943.3 956.4h7v4.4h-7zM888.8 964.2h7v4.4h-7zM940.0 964.2h7v4.4h-7zM893.9 972.2h7v4.4h-7zM914.4 972.2h7v4.4h-7zM931.1 972.2h7v4.4h-7zM957.8 972.2h7v4.4h-7zM891.7 980.2h7v4.4h-7zM927.8 980.2h7v4.4h-7zM1346.1 868.8h7v4.4h-7zM1437.8 876.5h7v4.4h-7zM1269.8 884.8h7v4.4h-7zM1327.6 884.8h7v4.4h-7zM1363.7 884.8h7v4.4h-7zM1354.3 892.8h7v4.4h-7zM1406.6 892.8h7v4.4h-7zM1442.7 892.8h7v4.4h-7zM1320.5 900.6h7v4.4h-7zM1433.3 900.6h7v4.4h-7zM1173.0 908.6h7v4.4h-7zM1209.7 908.6h7v4.4h-7zM1442.7 908.6h7v4.4h-7zM1444.5 916.6h7v4.4h-7z" fill="#7aaad6" stroke="#7aaad6" stroke-width="1.4" stroke-linejoin="round"/>
<path d="M1061.8 829.9h6.4v3h-6.4zM981.0 845.6h6.4v3h-6.4zM1031.1 861.7h6.4v3h-6.4zM1075.6 861.7h6.4v3h-6.4zM942.1 869.5h6.4v3h-6.4zM959.4 869.5h6.4v3h-6.4zM995.0 869.5h6.4v3h-6.4zM1012.8 869.5h6.4v3h-6.4zM1040.0 869.5h6.4v3h-6.4zM1057.8 869.5h6.4v3h-6.4zM1084.5 869.5h6.4v3h-6.4zM894.9 877.2h6.4v3h-6.4zM923.2 877.2h6.4v3h-6.4zM968.3 877.2h6.4v3h-6.4zM858.6 885.5h6.4v3h-6.4zM886.5 885.5h6.4v3h-6.4zM894.9 885.5h6.4v3h-6.4zM932.7 885.5h6.4v3h-6.4zM1040.0 885.5h6.4v3h-6.4zM1101.9 885.5h6.4v3h-6.4zM886.5 893.5h6.4v3h-6.4zM908.7 893.5h6.4v3h-6.4zM986.6 893.5h6.4v3h-6.4zM1057.4 893.5h6.4v3h-6.4zM1101.9 893.5h6.4v3h-6.4zM932.7 901.3h6.4v3h-6.4zM1047.8 901.3h6.4v3h-6.4zM1097.4 901.3h6.4v3h-6.4zM1106.8 901.3h6.4v3h-6.4zM1147.9 901.3h6.4v3h-6.4zM827.9 909.3h6.4v3h-6.4zM1034.4 909.3h6.4v3h-6.4zM1097.4 909.3h6.4v3h-6.4zM1106.8 909.3h6.4v3h-6.4zM1116.1 909.3h6.4v3h-6.4zM1146.8 909.3h6.4v3h-6.4zM899.4 917.3h6.4v3h-6.4zM927.2 917.3h6.4v3h-6.4zM951.0 917.3h6.4v3h-6.4zM1025.5 917.3h6.4v3h-6.4zM1070.7 917.3h6.4v3h-6.4zM1079.6 917.3h6.4v3h-6.4zM1097.4 917.3h6.4v3h-6.4zM1106.8 917.3h6.4v3h-6.4zM1116.1 917.3h6.4v3h-6.4zM1143.5 917.3h6.4v3h-6.4zM824.2 925.3h6.4v3h-6.4zM850.9 925.3h6.4v3h-6.4zM868.7 925.3h6.4v3h-6.4zM894.9 925.3h6.4v3h-6.4zM1034.4 925.3h6.4v3h-6.4zM1043.3 925.3h6.4v3h-6.4zM1061.8 925.3h6.4v3h-6.4zM1097.4 925.3h6.4v3h-6.4zM1125.0 925.3h6.4v3h-6.4zM1133.9 925.3h6.4v3h-6.4zM1143.5 925.3h6.4v3h-6.4zM913.2 933.1h6.4v3h-6.4zM932.1 933.1h6.4v3h-6.4zM941.0 933.1h6.4v3h-6.4zM968.3 933.1h6.4v3h-6.4zM1030.0 933.1h6.4v3h-6.4zM1106.8 933.1h6.4v3h-6.4zM1133.9 933.1h6.4v3h-6.4zM1142.8 933.1h6.4v3h-6.4zM841.5 941.1h6.4v3h-6.4zM869.1 941.1h6.4v3h-6.4zM941.0 941.1h6.4v3h-6.4zM1017.3 941.1h6.4v3h-6.4zM1048.5 941.1h6.4v3h-6.4zM1084.5 941.1h6.4v3h-6.4zM1142.8 941.1h6.4v3h-6.4zM908.0 949.1h6.4v3h-6.4zM956.5 949.1h6.4v3h-6.4zM976.1 949.1h6.4v3h-6.4zM1039.5 949.1h6.4v3h-6.4zM1097.8 949.1h6.4v3h-6.4zM1133.9 949.1h6.4v3h-6.4zM1142.8 949.1h6.4v3h-6.4zM934.7 957.1h6.4v3h-6.4zM1048.5 957.1h6.4v3h-6.4zM1061.4 957.1h6.4v3h-6.4zM859.3 964.9h6.4v3h-6.4zM880.2 964.9h6.4v3h-6.4zM898.2 964.9h6.4v3h-6.4zM1044.0 964.9h6.4v3h-6.4zM905.8 972.9h6.4v3h-6.4zM949.2 972.9h6.4v3h-6.4zM919.2 980.9h6.4v3h-6.4zM937.0 980.9h6.4v3h-6.4zM962.6 980.9h6.4v3h-6.4zM923.2 996.7h6.4v3h-6.4zM932.1 996.7h6.4v3h-6.4zM905.4 1004.8h6.4v3h-6.4zM892.0 1012.8h6.4v3h-6.4zM1249.4 837.9h6.4v3h-6.4zM1249.4 845.6h6.4v3h-6.4zM1237.8 853.4h6.4v3h-6.4zM1254.5 853.4h6.4v3h-6.4zM1187.7 861.7h6.4v3h-6.4zM1254.5 861.7h6.4v3h-6.4zM1264.1 861.7h6.4v3h-6.4zM1170.6 869.5h6.4v3h-6.4zM1254.5 869.5h6.4v3h-6.4zM1406.9 869.5h6.4v3h-6.4zM1170.6 877.2h6.4v3h-6.4zM1192.2 877.2h6.4v3h-6.4zM1254.5 877.2h6.4v3h-6.4zM1270.1 877.2h6.4v3h-6.4zM1336.8 877.2h6.4v3h-6.4zM1402.0 877.2h6.4v3h-6.4zM1411.4 877.2h6.4v3h-6.4zM1170.6 885.5h6.4v3h-6.4zM1192.2 885.5h6.4v3h-6.4zM1238.5 885.5h6.4v3h-6.4zM1257.2 885.5h6.4v3h-6.4zM1281.2 885.5h6.4v3h-6.4zM1336.8 885.5h6.4v3h-6.4zM1355.1 885.5h6.4v3h-6.4zM1397.6 885.5h6.4v3h-6.4zM1161.5 893.5h6.4v3h-6.4zM1170.6 893.5h6.4v3h-6.4zM1206.0 893.5h6.4v3h-6.4zM1245.6 893.5h6.4v3h-6.4zM1263.4 893.5h6.4v3h-6.4zM1281.2 893.5h6.4v3h-6.4zM1319.0 893.5h6.4v3h-6.4zM1397.6 893.5h6.4v3h-6.4zM1424.7 893.5h6.4v3h-6.4zM1152.6 901.3h6.4v3h-6.4zM1161.5 901.3h6.4v3h-6.4zM1170.6 901.3h6.4v3h-6.4zM1200.6 901.3h6.4v3h-6.4zM1227.8 901.3h6.4v3h-6.4zM1271.2 901.3h6.4v3h-6.4zM1281.2 901.3h6.4v3h-6.4zM1299.4 901.3h6.4v3h-6.4zM1345.3 901.3h6.4v3h-6.4zM1380.2 901.3h6.4v3h-6.4zM1415.8 901.3h6.4v3h-6.4zM1451.9 901.3h6.4v3h-6.4zM1479.2 901.3h6.4v3h-6.4zM1181.7 909.3h6.4v3h-6.4zM1200.6 909.3h6.4v3h-6.4zM1219.3 909.3h6.4v3h-6.4zM1254.9 909.3h6.4v3h-6.4zM1267.8 909.3h6.4v3h-6.4zM1285.6 909.3h6.4v3h-6.4zM1312.4 909.3h6.4v3h-6.4zM1330.2 909.3h6.4v3h-6.4zM1376.4 909.3h6.4v3h-6.4zM1384.7 909.3h6.4v3h-6.4zM1404.7 909.3h6.4v3h-6.4zM1433.6 909.3h6.4v3h-6.4zM1152.6 917.3h6.4v3h-6.4zM1219.3 917.3h6.4v3h-6.4zM1228.2 917.3h6.4v3h-6.4zM1285.6 917.3h6.4v3h-6.4zM1362.9 917.3h6.4v3h-6.4zM1458.1 917.3h6.4v3h-6.4zM1161.5 925.3h6.4v3h-6.4zM1170.6 925.3h6.4v3h-6.4zM1188.4 925.3h6.4v3h-6.4zM1206.7 925.3h6.4v3h-6.4zM1224.5 925.3h6.4v3h-6.4zM1250.5 925.3h6.4v3h-6.4zM1458.5 925.3h6.4v3h-6.4zM1152.6 933.1h6.4v3h-6.4zM1202.2 933.1h6.4v3h-6.4zM1237.4 933.1h6.4v3h-6.4zM1281.6 933.1h6.4v3h-6.4zM1453.7 933.1h6.4v3h-6.4zM1165.9 941.1h6.4v3h-6.4zM1476.6 941.1h6.4v3h-6.4zM1152.6 949.1h6.4v3h-6.4zM1463.0 949.1h6.4v3h-6.4zM1467.7 972.9h6.4v3h-6.4zM1480.4 980.9h6.4v3h-6.4z" fill="#c66a2b" stroke="#c66a2b" stroke-width="1.4" stroke-linejoin="round"/>
<path d="M995.9 837.9h6.4v3h-6.4zM993.3 845.6h6.4v3h-6.4zM1006.2 845.6h6.4v3h-6.4zM1057.4 845.6h6.4v3h-6.4zM972.8 853.4h6.4v3h-6.4zM1006.2 853.4h6.4v3h-6.4zM1048.5 853.4h6.4v3h-6.4zM1057.4 853.4h6.4v3h-6.4zM890.2 861.7h6.4v3h-6.4zM972.8 861.7h6.4v3h-6.4zM995.5 861.7h6.4v3h-6.4zM1013.3 861.7h6.4v3h-6.4zM1022.2 861.7h6.4v3h-6.4zM1040.0 861.7h6.4v3h-6.4zM1057.4 861.7h6.4v3h-6.4zM923.2 869.5h6.4v3h-6.4zM950.5 869.5h6.4v3h-6.4zM977.2 869.5h6.4v3h-6.4zM986.1 869.5h6.4v3h-6.4zM1003.9 869.5h6.4v3h-6.4zM1066.7 869.5h6.4v3h-6.4zM904.3 877.2h6.4v3h-6.4zM942.1 877.2h6.4v3h-6.4zM959.4 877.2h6.4v3h-6.4zM977.2 877.2h6.4v3h-6.4zM1040.0 877.2h6.4v3h-6.4zM1075.6 877.2h6.4v3h-6.4zM913.6 885.5h6.4v3h-6.4zM942.1 885.5h6.4v3h-6.4zM991.0 885.5h6.4v3h-6.4zM1048.9 885.5h6.4v3h-6.4zM1066.7 885.5h6.4v3h-6.4zM858.6 893.5h6.4v3h-6.4zM877.6 893.5h6.4v3h-6.4zM899.8 893.5h6.4v3h-6.4zM932.7 893.5h6.4v3h-6.4zM977.2 893.5h6.4v3h-6.4zM942.1 901.3h6.4v3h-6.4zM1038.9 901.3h6.4v3h-6.4zM868.2 909.3h6.4v3h-6.4zM913.6 909.3h6.4v3h-6.4zM923.2 909.3h6.4v3h-6.4zM942.1 909.3h6.4v3h-6.4zM1076.7 909.3h6.4v3h-6.4zM837.5 917.3h6.4v3h-6.4zM868.2 917.3h6.4v3h-6.4zM959.9 917.3h6.4v3h-6.4zM1043.3 917.3h6.4v3h-6.4zM815.3 925.3h6.4v3h-6.4zM833.1 925.3h6.4v3h-6.4zM859.8 925.3h6.4v3h-6.4zM903.8 925.3h6.4v3h-6.4zM968.3 925.3h6.4v3h-6.4zM1079.6 925.3h6.4v3h-6.4zM886.5 933.1h6.4v3h-6.4zM959.4 933.1h6.4v3h-6.4zM1043.3 933.1h6.4v3h-6.4zM1070.7 933.1h6.4v3h-6.4zM1079.6 933.1h6.4v3h-6.4zM1115.7 933.1h6.4v3h-6.4zM832.6 941.1h6.4v3h-6.4zM859.8 941.1h6.4v3h-6.4zM905.8 941.1h6.4v3h-6.4zM959.4 941.1h6.4v3h-6.4zM846.4 949.1h6.4v3h-6.4zM869.8 949.1h6.4v3h-6.4zM916.5 949.1h6.4v3h-6.4zM925.8 949.1h6.4v3h-6.4zM947.6 949.1h6.4v3h-6.4zM967.2 949.1h6.4v3h-6.4zM1056.9 949.1h6.4v3h-6.4zM1088.5 949.1h6.4v3h-6.4zM880.2 957.1h6.4v3h-6.4zM907.2 957.1h6.4v3h-6.4zM925.8 957.1h6.4v3h-6.4zM850.4 964.9h6.4v3h-6.4zM884.9 972.9h6.4v3h-6.4zM940.3 972.9h6.4v3h-6.4zM901.4 980.9h6.4v3h-6.4zM910.3 980.9h6.4v3h-6.4zM953.7 980.9h6.4v3h-6.4zM892.0 989.0h6.4v3h-6.4zM909.8 989.0h6.4v3h-6.4zM932.5 989.0h6.4v3h-6.4zM883.1 996.7h6.4v3h-6.4zM892.0 996.7h6.4v3h-6.4zM914.3 996.7h6.4v3h-6.4zM941.0 996.7h6.4v3h-6.4zM896.5 1004.8h6.4v3h-6.4zM1269.0 853.4h6.4v3h-6.4zM1234.0 869.5h6.4v3h-6.4zM1264.1 869.5h6.4v3h-6.4zM1161.5 877.2h6.4v3h-6.4zM1182.8 877.2h6.4v3h-6.4zM1243.4 877.2h6.4v3h-6.4zM1345.7 877.2h6.4v3h-6.4zM1345.7 885.5h6.4v3h-6.4zM1443.0 885.5h6.4v3h-6.4zM1455.9 885.5h6.4v3h-6.4zM1196.6 893.5h6.4v3h-6.4zM1236.7 893.5h6.4v3h-6.4zM1271.9 893.5h6.4v3h-6.4zM1327.9 893.5h6.4v3h-6.4zM1345.7 893.5h6.4v3h-6.4zM1372.0 893.5h6.4v3h-6.4zM1433.6 893.5h6.4v3h-6.4zM1479.2 893.5h6.4v3h-6.4zM1354.2 901.3h6.4v3h-6.4zM1363.1 901.3h6.4v3h-6.4zM1398.0 901.3h6.4v3h-6.4zM1443.0 901.3h6.4v3h-6.4zM1460.3 901.3h6.4v3h-6.4zM1156.1 909.3h6.4v3h-6.4zM1294.5 909.3h6.4v3h-6.4zM1321.3 909.3h6.4v3h-6.4zM1393.6 909.3h6.4v3h-6.4zM1413.6 909.3h6.4v3h-6.4zM1424.7 909.3h6.4v3h-6.4zM1451.4 909.3h6.4v3h-6.4zM1473.2 909.3h6.4v3h-6.4zM1165.9 917.3h6.4v3h-6.4zM1183.7 917.3h6.4v3h-6.4zM1201.5 917.3h6.4v3h-6.4zM1371.8 917.3h6.4v3h-6.4zM1435.8 917.3h6.4v3h-6.4zM1179.5 925.3h6.4v3h-6.4zM1215.6 925.3h6.4v3h-6.4zM1241.8 925.3h6.4v3h-6.4zM1268.3 925.3h6.4v3h-6.4zM1285.6 925.3h6.4v3h-6.4zM1467.7 925.3h6.4v3h-6.4zM1193.3 933.1h6.4v3h-6.4zM1444.8 933.1h6.4v3h-6.4zM1481.5 933.1h6.4v3h-6.4zM1476.6 957.1h6.4v3h-6.4zM1463.0 964.9h6.4v3h-6.4zM1472.1 980.9h6.4v3h-6.4z" fill="#2477bb" stroke="#2477bb" stroke-width="1.4" stroke-linejoin="round"/>
<path d="M899.5 852.7h7v4.4h-7zM1021.4 852.7h7v4.4h-7zM899.5 861.0h7v4.4h-7zM932.9 861.0h7v4.4h-7zM1066.4 861.0h7v4.4h-7zM1084.2 861.0h7v4.4h-7zM1048.6 876.5h7v4.4h-7zM981.4 884.8h7v4.4h-7zM1048.2 892.8h7v4.4h-7zM867.9 900.6h7v4.4h-7zM922.9 900.6h7v4.4h-7zM931.8 908.6h7v4.4h-7zM1067.5 908.6h7v4.4h-7zM859.0 916.6h7v4.4h-7zM936.7 916.6h7v4.4h-7zM886.2 924.6h7v4.4h-7zM1087.5 924.6h7v4.4h-7zM1116.5 924.6h7v4.4h-7zM949.6 940.4h7v4.4h-7zM968.0 940.4h7v4.4h-7zM1025.9 940.4h7v4.4h-7zM1093.1 940.4h7v4.4h-7zM878.4 948.4h7v4.4h-7zM1124.7 948.4h7v4.4h-7zM1070.4 956.4h7v4.4h-7zM841.2 964.2h7v4.4h-7zM867.9 964.2h7v4.4h-7zM949.6 964.2h7v4.4h-7zM1034.8 964.2h7v4.4h-7zM882.8 988.3h7v4.4h-7zM900.6 988.3h7v4.4h-7zM922.9 988.3h7v4.4h-7zM900.6 996.0h7v4.4h-7zM873.9 1004.1h7v4.4h-7zM865.0 1012.1h7v4.4h-7zM873.9 1012.1h7v4.4h-7zM882.8 1012.1h7v4.4h-7zM1354.8 876.5h7v4.4h-7zM1254.2 892.8h7v4.4h-7zM1336.5 892.8h7v4.4h-7zM1363.2 892.8h7v4.4h-7zM1451.6 892.8h7v4.4h-7zM1290.2 900.6h7v4.4h-7zM1388.4 900.6h7v4.4h-7zM1406.6 900.6h7v4.4h-7zM1424.4 900.6h7v4.4h-7zM1245.7 908.6h7v4.4h-7zM1367.2 908.6h7v4.4h-7zM1174.5 916.6h7v4.4h-7zM1210.1 916.6h7v4.4h-7zM1245.7 916.6h7v4.4h-7zM1259.1 916.6h7v4.4h-7zM1197.0 924.6h7v4.4h-7zM1228.2 932.4h7v4.4h-7zM1272.4 932.4h7v4.4h-7zM1471.8 948.4h7v4.4h-7zM1475.6 972.2h7v4.4h-7z" fill="#e0e0e0" stroke="#e0e0e0" stroke-width="1.4" stroke-linejoin="round"/>
</g></svg>
<div style="position:absolute;left:1142px;top:55px;width:366px;height:335.5px;background:#252526;box-shadow:0 3px 9px rgba(0,0,0,0.45);clip-path:inset(0 -12px -14px -12px)"></div>
<div style="position:absolute;left:1472px;top:9px;width:36px;height:36px;border-radius:8px;background:#37373a"></div>
<svg style="position:absolute;left:1472px;top:9px" width="36" height="36" viewBox="1472 9 36 36" fill="#c8c8c8">
<circle cx="1481.7" cy="26" r="1.9"/><circle cx="1490.1" cy="26" r="1.9"/><circle cx="1498.5" cy="26" r="1.9"/></svg>
<div id="m1" class="t" style="left:1186.4px;top:62.29px;height:29px;line-height:29px;font-size:20.8px;color:#cccccc;font-weight:normal;font-style:normal;transform-origin:left center;transform:scaleX(0.9969)">Show Opened Editors</div>
<div style="position:absolute;left:1160px;top:111px;width:329px;height:1px;background:#626262;"></div>
<div style="position:absolute;left:1161px;top:110px;width:327px;height:1px;background:#303031;"></div>
<div id="m2" class="t" style="left:1186.4px;top:129.29px;height:29px;line-height:29px;font-size:20.8px;color:#cccccc;font-weight:normal;font-style:normal;transform-origin:left center;transform:scaleX(0.9800)">Close All</div>
<div id="m2k" class="t" style="left:1378.4px;top:129.29px;height:29px;line-height:29px;font-size:20.8px;color:#cccccc;font-weight:normal;font-style:normal;transform-origin:left center;transform:scaleX(1.0086)">Ctrl+K W</div>
<div id="m3" class="t" style="left:1186.4px;top:170.59px;height:29px;line-height:29px;font-size:20.8px;color:#cccccc;font-weight:normal;font-style:normal;transform-origin:left center;transform:scaleX(0.9438)">Close Saved</div>
<div id="m3k" class="t" style="left:1383.5px;top:170.59px;height:29px;line-height:29px;font-size:20.8px;color:#cccccc;font-weight:normal;font-style:normal;transform-origin:left center;transform:scaleX(0.9980)">Ctrl+K U</div>
<div style="position:absolute;left:1160px;top:219px;width:329px;height:1px;background:#626262;"></div>
<div style="position:absolute;left:1161px;top:218px;width:327px;height:1px;background:#303031;"></div>
<div id="m4" class="t" style="left:1186.4px;top:237.29px;height:29px;line-height:29px;font-size:20.8px;color:#cccccc;font-weight:normal;font-style:normal;transform-origin:left center;transform:scaleX(0.9861)">Keep Editors Open</div>
<div style="position:absolute;left:1160px;top:286px;width:329px;height:1px;background:#626262;"></div>
<div style="position:absolute;left:1161px;top:285px;width:327px;height:1px;background:#303031;"></div>
<div id="m5" class="t" style="left:1186.4px;top:304.29px;height:29px;line-height:29px;font-size:20.8px;color:#cccccc;font-weight:normal;font-style:normal;transform-origin:left center;transform:scaleX(1.0058)">Show Metadata Differences</div>
<div id="m6" class="t" style="left:1186.4px;top:345.79px;height:29px;line-height:29px;font-size:20.8px;color:#cccccc;font-weight:normal;font-style:normal;transform-origin:left center;transform:scaleX(1.0057)">Show Outputs Differences</div>
<svg style="position:absolute;left:1154.9px;top:310.2px" width="20" height="17" viewBox="0 0 20 17"><path d="M1.4 9.4L5.8 14.4L17.4 1.8" stroke="#cccccc" stroke-width="1.5" fill="none"/></svg>
<svg style="position:absolute;left:1154.9px;top:351.7px" width="20" height="17" viewBox="0 0 20 17"><path d="M1.4 9.4L5.8 14.4L17.4 1.8" stroke="#cccccc" stroke-width="1.5" fill="none"/></svg>
<svg style="position:absolute;left:1130px;top:284px" width="389" height="106" viewBox="1130 284 389 106"><rect x="1138.6" y="291.5" width="373.7" height="89.9" rx="13.4" fill="none" stroke="#fe0000" stroke-width="3.4"/></svg>
</body></html>
